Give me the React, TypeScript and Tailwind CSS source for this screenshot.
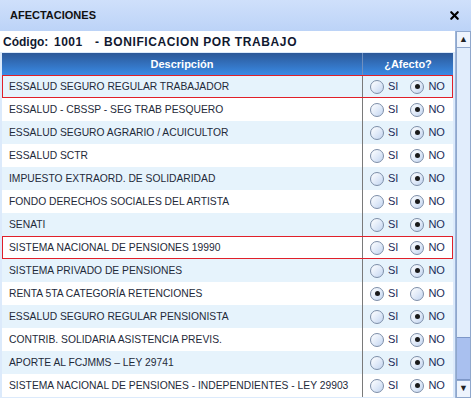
import { X } from "lucide-react";

interface Row {
  name: string;
  afecto: boolean;
  marked?: boolean;
}

const rows: Row[] = [
  { name: "ESSALUD SEGURO REGULAR TRABAJADOR", afecto: false, marked: true },
  { name: "ESSALUD - CBSSP - SEG TRAB PESQUERO", afecto: false },
  { name: "ESSALUD SEGURO AGRARIO / ACUICULTOR", afecto: false },
  { name: "ESSALUD SCTR", afecto: false },
  { name: "IMPUESTO EXTRAORD. DE SOLIDARIDAD", afecto: false },
  { name: "FONDO DERECHOS SOCIALES DEL ARTISTA", afecto: false },
  { name: "SENATI", afecto: false },
  { name: "SISTEMA NACIONAL DE PENSIONES 19990", afecto: false, marked: true },
  { name: "SISTEMA PRIVADO DE PENSIONES", afecto: false },
  { name: "RENTA 5TA CATEGORÍA RETENCIONES", afecto: true },
  { name: "ESSALUD SEGURO REGULAR PENSIONISTA", afecto: false },
  { name: "CONTRIB. SOLIDARIA ASISTENCIA PREVIS.", afecto: false },
  { name: "APORTE AL FCJMMS – LEY 29741", afecto: false },
  { name: "SISTEMA NACIONAL DE PENSIONES - INDEPENDIENTES - LEY 29903", afecto: false },
];

const Radio = ({ checked, label }: { checked: boolean; label: string }) => (
  <div className="flex items-center gap-[4px]">
    <span className="flex h-[14px] w-[14px] items-center justify-center rounded-full border border-[#7d8ea8] bg-[linear-gradient(135deg,#ffffff_0%,#dfe9f8_55%,#c2d4ef_100%)]">
      {checked && <span className="h-[5px] w-[5px] rounded-full bg-[#1a1a1a]" />}
    </span>
    <span className="text-[11px] text-[#1b2b58]">{label}</span>
  </div>
);

const App = () => {
  return (
    <div className="flex h-[398px] w-[471px] flex-col overflow-hidden bg-[#dceafb] font-['Liberation_Sans',Arial,sans-serif]">
      <div className="flex h-[31px] shrink-0 items-center justify-between bg-[linear-gradient(#cfe0fb,#bcd3f7)] pl-[10px] pr-[10px]">
        <span className="text-[11px] font-bold text-[#111]">AFECTACIONES</span>
        <X size={13} strokeWidth={4} className="text-black" />
      </div>
      <div className="flex min-h-0 flex-1">
        <div className="flex min-w-0 flex-1 flex-col bg-white">
          <div className="flex h-[21px] shrink-0 items-start pl-[3px] pt-[2px] text-[12px] font-bold text-[#101830]">
            <span className="w-[51px]">Código:</span>
            <span className="w-[41px] tracking-[0.5px]">1001</span>
            <span className="w-[9px]">-</span>
            <span className="tracking-[0.6px]">BONIFICACION POR TRABAJO</span>
          </div>
          <div className="flex flex-1 flex-col bg-[#dceafb] pl-[2px] pt-[1px] pr-[2px]">
            <div className="flex h-[22px] shrink-0 bg-[linear-gradient(#2c5898,#3a8ae4)] text-[11px] font-bold text-white">
              <div className="flex w-[360px] items-center justify-center">Descripción</div>
              <div className="flex flex-1 items-center justify-center border-l border-[#6f8fbf]">¿Afecto?</div>
            </div>
            {rows.map((r, i) => (
              <div
                key={r.name}
                className={`flex h-[23px] shrink-0 text-[10.3px] text-[#1e2a3a] ${
                  i % 2 === 0 ? "bg-[#e6f3fc]" : "bg-white"
                } ${r.marked ? "outline outline-1 -outline-offset-1 outline-[#e0202a]" : ""}`}
              >
                <div className="flex w-[360px] items-center pl-[7px] whitespace-nowrap">{r.name}</div>
                <div className="flex flex-1 items-center gap-[12px] border-l border-[#7a7a7a] pl-[7px]">
                  <Radio checked={r.afecto} label="SI" />
                  <Radio checked={!r.afecto} label="NO" />
                </div>
              </div>
            ))}
          </div>
        </div>
        <div className="flex w-[16px] shrink-0 flex-col border-l border-[#9cb4d8] bg-[#dceafb]">
          <div className="flex h-[17px] items-center justify-center border border-[#8fa7cc] bg-[#eef4fd] text-[9px] text-[#222]">
            ▲
          </div>
          <div className="flex flex-1 flex-col border-x border-[#8fa7cc] bg-[#e1edfc]">
            <div className="flex-1" />
            <div className="h-[43px] border-y border-[#7d97c8] bg-[#a9c0ef]" />
          </div>
          <div className="flex h-[18px] items-center justify-center border border-[#8fa7cc] bg-[#eef4fd] text-[9px] text-[#222]">
            ▼
          </div>
        </div>
      </div>
    </div>
  );
};

export default App;
